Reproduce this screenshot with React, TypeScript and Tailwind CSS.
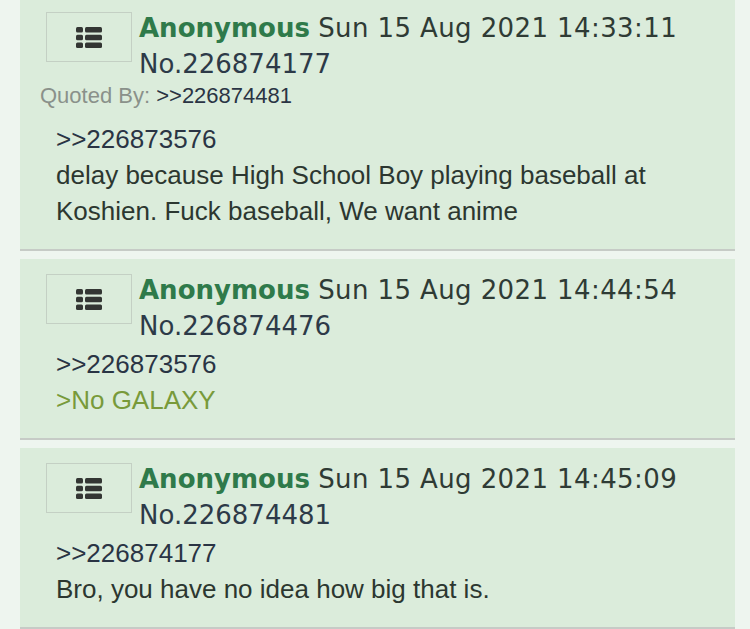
import React from "react";

type Post = {
  no: string;
  date: string;
  quotedBy?: string;
  lines: { text: string; kind: "quote" | "green" | "plain" }[];
};

const posts: Post[] = [
  {
    no: "226874177",
    date: "Sun 15 Aug 2021 14:33:11",
    quotedBy: ">>226874481",
    lines: [
      { text: ">>226873576", kind: "quote" },
      { text: "delay because High School Boy playing baseball at", kind: "plain" },
      { text: "Koshien. Fuck baseball, We want anime", kind: "plain" },
    ],
  },
  {
    no: "226874476",
    date: "Sun 15 Aug 2021 14:44:54",
    lines: [
      { text: ">>226873576", kind: "quote" },
      { text: ">No GALAXY", kind: "green" },
    ],
  },
  {
    no: "226874481",
    date: "Sun 15 Aug 2021 14:45:09",
    lines: [
      { text: ">>226874177", kind: "quote" },
      { text: "Bro, you have no idea how big that is.", kind: "plain" },
    ],
  },
];

function MenuIcon() {
  return (
    <svg width="26" height="21" viewBox="0 0 26 21" fill="#333633">
      <rect x="0" y="0" width="7" height="5.5" rx="1.5" />
      <rect x="9" y="0" width="17" height="5.5" rx="1.5" />
      <rect x="0" y="7.7" width="7" height="5.5" rx="1.5" />
      <rect x="9" y="7.7" width="17" height="5.5" rx="1.5" />
      <rect x="0" y="15.4" width="7" height="5.5" rx="1.5" />
      <rect x="9" y="15.4" width="17" height="5.5" rx="1.5" />
    </svg>
  );
}

function PostCard({ post }: { post: Post }) {
  const lineColor = (kind: string) =>
    kind === "green" ? "text-[#789a3a]" : kind === "quote" ? "text-[#2a3444]" : "text-[#2c3730]";

  return (
    <div className="bg-[#dbecdb] border-b-2 border-[#c6cbc6] pl-[20px] pt-[13px] pb-[20px]">
      <div className="flex">
        <div className="ml-[6px] mt-[2px] w-[86px] h-[50px] border border-[#c4d0c4] flex items-center justify-center shrink-0">
          <MenuIcon />
        </div>
        <div className="ml-[7px] text-[26px] leading-[36px] font-['DejaVu_Sans',sans-serif] text-[#2d3a48]">
          <div className="whitespace-nowrap">
            <span className="font-bold text-[#2f7a4a]">Anonymous</span>{" "}
            <span className="text-[#2f3b35] tracking-[0.4px]">{post.date}</span>
          </div>
          <div>No.{post.no}</div>
        </div>
      </div>
      {post.quotedBy && (
        <div className="text-[22px] leading-[28px] font-['Liberation_Sans',Arial,sans-serif] text-[#8a918a]">
          Quoted By: <span className="text-[#2a3444]">{post.quotedBy}</span>
        </div>
      )}
      <div
        className={`ml-[16px] text-[26px] leading-[36px] font-['Liberation_Sans',Arial,sans-serif] ${
          post.quotedBy ? "mt-[11px]" : "mt-[2px]"
        }`}
      >
        {post.lines.map((l, i) => (
          <div key={i} className={lineColor(l.kind)}>
            {l.text}
          </div>
        ))}
      </div>
    </div>
  );
}

export default function App() {
  return (
    <main className="min-h-screen bg-[#eef5ef] overflow-hidden">
      <div className="-mt-[3px] ml-[20px] w-[715px] flex flex-col gap-[8px]">
        {posts.map((p) => (
          <PostCard key={p.no} post={p} />
        ))}
      </div>
    </main>
  );
}
